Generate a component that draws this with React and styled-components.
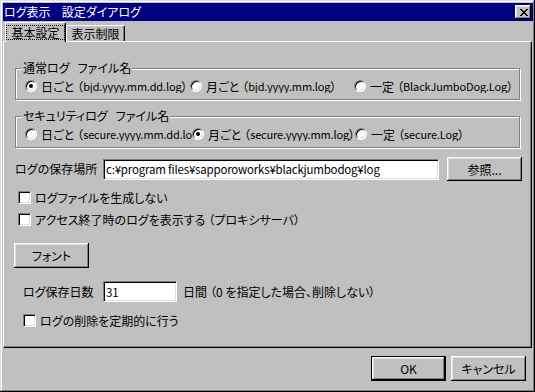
import React from 'react';
import styled, { createGlobalStyle, css } from 'styled-components';

const FONT = `"MS UI Gothic", "Noto Sans CJK JP", "Noto Sans", sans-serif`;

const GlobalStyle = createGlobalStyle`
  html, body { margin: 0; padding: 0; background: #c0c0c0; }
  body { font-family: ${FONT}; font-size: 12px; color: #000; }
  * { box-sizing: border-box; }
`;

const Window = styled.div`
  width: 535px;
  height: 392px;
  background: #c0c0c0;
  padding: 3px 2px 3px 3px;
  display: flex;
  flex-direction: column;
  box-shadow: inset -1px -1px 0 #000, inset 1px 1px 0 #dfdfdf,
    inset -2px -2px 0 #808080, inset 2px 2px 0 #fff;
  font-family: ${FONT};
  font-size: 12px;
  font-feature-settings: "palt";
  overflow: hidden;
`;

const TitleBar = styled.div`
  height: 18px;
  flex: none;
  background: #000080;
  color: #fff;
  display: flex;
  align-items: center;
  justify-content: space-between;
  padding: 0 2px 0 1px;
`;

const TitleText = styled.span`
  font-size: 12px;
  line-height: 12px;
  white-space: pre;
  word-spacing: 1px;
`;

const CloseButton = styled.div`
  width: 16px;
  height: 14px;
  background: #c0c0c0;
  display: flex;
  align-items: center;
  justify-content: center;
  padding-left: 1px;
  box-shadow: inset -1px -1px 0 #000, inset 1px 1px 0 #fff,
    inset -2px -2px 0 #808080, inset 2px 2px 0 #dfdfdf;
`;

const Client = styled.div`
  flex: 1;
  display: flex;
  flex-direction: column;
  padding-right: 1px;
`;

const TabStrip = styled.div`
  height: 20px;
  flex: none;
  display: flex;
  align-items: flex-end;
  padding-left: 2px;
  position: relative;
  z-index: 1;
`;

const Tab = styled.div`
  background: #c0c0c0;
  border-top: 1px solid #fff;
  border-left: 1px solid #fff;
  border-right: 1px solid #000;
  border-radius: 2px 2px 0 0;
  box-shadow: inset -1px 0 0 #808080;
  display: flex;
  align-items: center;
  justify-content: center;
  white-space: nowrap;
  ${(p) =>
    p.$active
      ? css`
          width: 61px;
          height: 20px;
          margin-bottom: -1px;
          padding-bottom: 1px;
        `
      : css`
          width: 59px;
          height: 16px;
        `}
`;

const FocusLabel = styled.span`
  border: 1px dotted #000;
  padding: 1px 4px 0;
  line-height: 12px;
  height: 15px;
`;

const TabPanel = styled.div`
  height: 307px;
  flex: none;
  border-top: 1px solid #fff;
  border-left: 1px solid #fff;
  border-right: 1px solid #000;
  border-bottom: 1px solid #000;
  box-shadow: inset -1px -1px 0 #808080;
  padding: 26px 11px 0 11px;
  display: flex;
  flex-direction: column;
`;

const GroupBox = styled.div`
  position: relative;
  height: 32px;
  flex: none;
  border: 1px solid #808080;
  box-shadow: inset 1px 1px 0 #fff, 1px 1px 0 #fff;
  margin-top: ${(p) => p.$mt || 0}px;
  padding: 10px 0 0 9px;
  display: flex;
  align-items: flex-start;
`;

const GroupTitle = styled.span`
  position: absolute;
  top: -7px;
  left: 6px;
  padding: 0 1px;
  background: #c0c0c0;
  line-height: 12px;
  white-space: pre;
`;

const RadioOption = styled.label`
  display: flex;
  align-items: center;
  height: 14px;
  width: ${(p) => (p.$w ? `${p.$w}px` : 'auto')};
  flex: none;
  overflow: hidden;
  white-space: nowrap;
`;

const RadioCircle = styled.span`
  position: relative;
  width: 12px;
  height: 12px;
  flex: none;
  margin-right: 4px;
  border-radius: 50%;
  background: #fff;
  border: 1px solid;
  border-color: #808080 #fff #fff #808080;
  box-shadow: inset 1px 1px 0 #000, inset -1px -1px 0 #dfdfdf;
  ${(p) =>
    p.$checked &&
    css`
      &::after {
        content: '';
        position: absolute;
        left: 3px;
        top: 3px;
        width: 4px;
        height: 4px;
        border-radius: 50%;
        background: #000;
      }
    `}
`;

const Latin = styled.span`
  font-size: 11px;
  letter-spacing: -0.15px;
`;

const OpenParen = styled.span`
  margin-left: 3px;
`;

const Row = styled.div`
  display: flex;
  align-items: center;
  flex: none;
  height: ${(p) => p.$h}px;
  margin-top: ${(p) => p.$mt || 0}px;
  margin-left: ${(p) => p.$indent || 0}px;
  white-space: nowrap;
`;

const FieldLabel = styled.span`
  width: ${(p) => p.$w}px;
  flex: none;
  line-height: 12px;
`;

const TextField = styled.input`
  width: ${(p) => p.$w}px;
  height: 21px;
  flex: none;
  margin: 0;
  padding: 0 2px;
  font: inherit;
  font-size: 11.5px;
  letter-spacing: -0.2px;
  color: #000;
  background: #fff;
  border: 1px solid;
  border-color: #808080 #fff #fff #808080;
  box-shadow: inset 1px 1px 0 #000, inset -1px -1px 0 #dfdfdf;
  outline: none;
`;

const Button = styled.button`
  width: 75px;
  height: ${(p) => p.$h || 25}px;
  flex: none;
  margin: 0 0 0 ${(p) => p.$ml || 0}px;
  padding: 0;
  font: inherit;
  font-size: 12px;
  color: #000;
  background: #c0c0c0;
  border: none;
  box-shadow: inset -1px -1px 0 #000, inset 1px 1px 0 #fff,
    inset -2px -2px 0 #808080, inset 2px 2px 0 #dfdfdf;
  ${(p) =>
    p.$default &&
    css`
      border: 1px solid #000;
    `}
`;

const CheckBox = styled.span`
  width: 13px;
  height: 13px;
  flex: none;
  margin-right: 4px;
  background: #fff;
  border: 1px solid;
  border-color: #808080 #fff #fff #808080;
  box-shadow: inset 1px 1px 0 #000, inset -1px -1px 0 #dfdfdf;
`;

const Trailing = styled.span`
  margin-left: ${(p) => p.$ml}px;
`;

const ButtonBar = styled.div`
  display: flex;
  justify-content: flex-end;
  gap: 5px;
  padding: 8px 6px 0 0;
`;

const CloseGlyph = () => (
  <svg width="8" height="7" viewBox="0 0 8 7" shapeRendering="crispEdges">
    <rect x="0" y="0" width="2" height="1" />
    <rect x="6" y="0" width="2" height="1" />
    <rect x="1" y="1" width="2" height="1" />
    <rect x="5" y="1" width="2" height="1" />
    <rect x="2" y="2" width="4" height="1" />
    <rect x="3" y="3" width="2" height="1" />
    <rect x="2" y="4" width="4" height="1" />
    <rect x="1" y="5" width="2" height="1" />
    <rect x="5" y="5" width="2" height="1" />
    <rect x="0" y="6" width="2" height="1" />
    <rect x="6" y="6" width="2" height="1" />
  </svg>
);

const Radio = ({ w, checked, label, file }) => (
  <RadioOption $w={w}>
    <RadioCircle $checked={checked} />
    {label}
    <OpenParen>（</OpenParen>
    <Latin>{file}</Latin>）
  </RadioOption>
);

const Check = ({ indent, mt, children }) => (
  <Row $h={13} $mt={mt} $indent={indent}>
    <CheckBox />
    <span>{children}</span>
  </Row>
);

export default function App() {
  return (
    <>
      <GlobalStyle />
      <Window>
        <TitleBar>
          <TitleText>ログ表示   設定ダイアログ</TitleText>
          <CloseButton>
            <CloseGlyph />
          </CloseButton>
        </TitleBar>
        <Client>
          <TabStrip>
            <Tab $active>
              <FocusLabel>基本設定</FocusLabel>
            </Tab>
            <Tab>表示制限</Tab>
          </TabStrip>
          <TabPanel>
            <GroupBox>
              <GroupTitle>通常ログ   ファイル名</GroupTitle>
              <Radio w={165} checked label="日ごと" file="bjd.yyyy.mm.dd.log" />
              <Radio w={164} label="月ごと" file="bjd.yyyy.mm.log" />
              <Radio label="一定" file="BlackJumboDog.Log" />
            </GroupBox>
            <GroupBox $mt={16}>
              <GroupTitle>セキュリティログ   ファイル名</GroupTitle>
              <Radio w={167} label="日ごと" file="secure.yyyy.mm.dd.log" />
              <Radio w={163} checked label="月ごと" file="secure.yyyy.mm.log" />
              <Radio label="一定" file="secure.Log" />
            </GroupBox>
            <Row $h={24} $mt={9}>
              <FieldLabel $w={88}>ログの保存場所</FieldLabel>
              <TextField
                $w={336}
                readOnly
                value="c:¥program files¥sapporoworks¥blackjumbodog¥log"
              />
              <Button $h={24} $ml={8}>参照...</Button>
            </Row>
            <Check indent={3} mt={10}>
              ログファイルを生成しない
            </Check>
            <Check indent={3} mt={9}>
              アクセス終了時のログを表示する<OpenParen>（</OpenParen>プロキシサーバ）
            </Check>
            <Row $h={25} $mt={17} $indent={-1}>
              <Button>フォント</Button>
            </Row>
            <Row $h={21} $mt={13} $indent={8}>
              <FieldLabel $w={80}>ログ保存日数</FieldLabel>
              <TextField $w={74} readOnly value="31" />
              <Trailing $ml={6}>
                日間<OpenParen>（</OpenParen>0 を指定した場合、削除しない）
              </Trailing>
            </Row>
            <Check indent={8} mt={12}>ログの削除を定期的に行う</Check>
          </TabPanel>
          <ButtonBar>
            <Button $default>OK</Button>
            <Button>キャンセル</Button>
          </ButtonBar>
        </Client>
      </Window>
    </>
  );
}
